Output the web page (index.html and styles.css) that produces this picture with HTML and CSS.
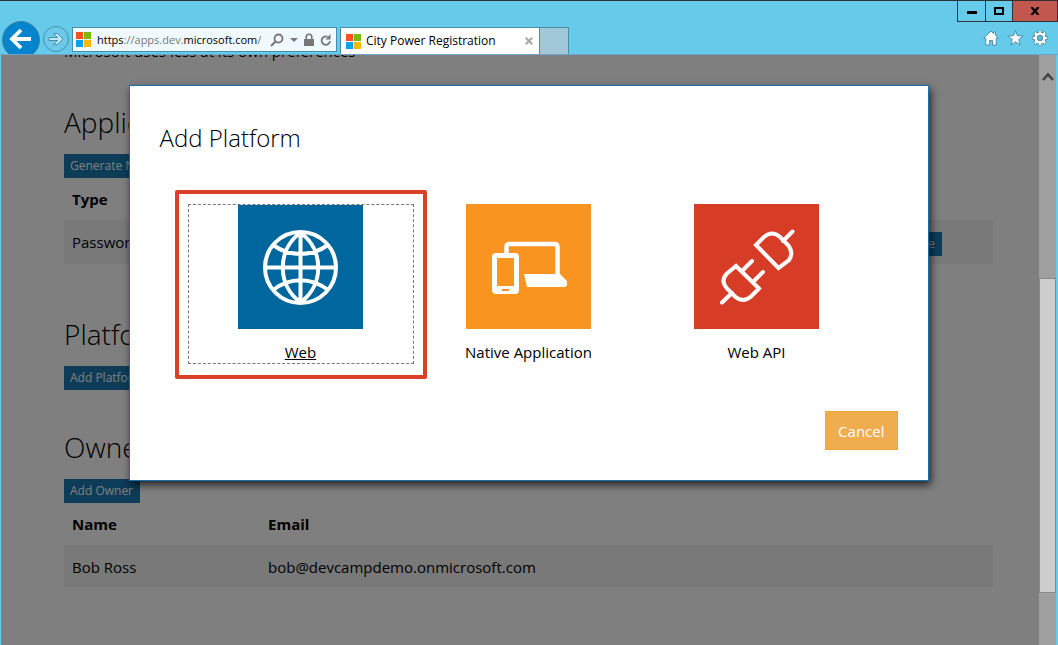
FILE: index.html
```html
<!DOCTYPE html>
<html lang="en">
<head>
<meta charset="utf-8">
<title>City Power Registration</title>
<link rel="stylesheet" href="styles.css">
</head>
<body>
<div class="window">
  <header class="chrome">
    <nav class="nav-buttons" aria-label="History">
      <button class="back" aria-label="Back">
        <svg width="40" height="40" viewBox="0 0 40 40"><circle cx="20" cy="20" r="18.5" fill="#0484cc" stroke="#3b7f9d"/><path d="M30 19H11M20 10L11 19l9 9" fill="none" stroke="#fff" stroke-width="3.800"/></svg>
      </button>
      <button class="forward" aria-label="Forward">
        <svg width="28" height="28" viewBox="0 0 28 28"><circle cx="14" cy="14" r="12.500" fill="#6cc9e9" stroke="#468fab"/><path d="M7 12.500h8.500l-4-4h4l5.500 5.500-5.500 5.500h-4l4-4H7z" fill="#bfe9f8" stroke="#468fab"/></svg>
      </button>
    </nav>
    <div class="address">
      <svg class="logo" width="15" height="15" viewBox="0 0 15 15"><path fill="#f8501f" d="M0 0h7v7H0z"/><path fill="#7db900" d="M8 0h7v7H8z"/><path fill="#00a3ee" d="M0 8h7v7H0z"/><path fill="#ffb800" d="M8 8h7v7H8z"/></svg>
      <a class="url" href="#"><b>https</b>://apps.dev.<b>microsoft.com</b>/</a>
      <button class="tool" aria-label="Search"><svg width="14" height="14" viewBox="0 0 14 14"><circle cx="8.500" cy="5.500" r="4" fill="none" stroke="#777" stroke-width="1.800"/><path d="M5.500 8.500L1 13" stroke="#777" stroke-width="2.200"/></svg></button>
      <button class="tool" aria-label="Show history"><svg width="8" height="14" viewBox="0 0 8 14"><path d="M0 5h8L4 9z" fill="#777"/></svg></button>
      <button class="tool" aria-label="Security"><svg width="10" height="14" viewBox="0 0 10 14"><path d="M0 6h10v7H0z" fill="#777"/><path d="M2.200 6V4a2.800 2.800 0 0 1 5.600 0v2" fill="none" stroke="#777" stroke-width="1.600"/></svg></button>
      <button class="tool" aria-label="Refresh"><svg width="12" height="14" viewBox="0 0 12 14"><path d="M7.500 3.800A4.200 4.200 0 1 0 10 8" fill="none" stroke="#777" stroke-width="1.800"/><path d="M10.500 1v5.500H5.500z" fill="#777"/></svg></button>
    </div>
    <div class="tab">
      <svg class="logo" width="15" height="15" viewBox="0 0 15 15"><path fill="#f8501f" d="M0 0h7v7H0z"/><path fill="#7db900" d="M8 0h7v7H8z"/><path fill="#00a3ee" d="M0 8h7v7H0z"/><path fill="#ffb800" d="M8 8h7v7H8z"/></svg>
      <span class="tab-title">City Power Registration</span>
      <button class="tool" aria-label="Close tab"><svg width="8" height="8" viewBox="0 0 8 8"><path d="M.8.8l6.400 6.400M7.200.8L.8 7.200" stroke="#a5a5a5" stroke-width="2"/></svg></button>
    </div>
    <button class="new-tab" aria-label="New tab"></button>
    <div class="right">
      <div class="controls">
        <button class="control minimize" aria-label="Minimize"><svg width="10" height="8" viewBox="0 0 10 8"><path d="M0 4h10v3H0z"/></svg></button>
        <button class="control maximize" aria-label="Maximize"><svg width="10" height="8" viewBox="0 0 10 8"><path d="M1 1h8v6H1z" fill="none" stroke="#000" stroke-width="2"/></svg></button>
        <button class="control close" aria-label="Close"><svg width="10" height="8" viewBox="0 0 10 8"><path d="M1.500 0l7 8M8.500 0l-7 8" stroke="#000" stroke-width="2.200"/></svg></button>
      </div>
      <div class="actions">
        <button class="tool" aria-label="Home"><svg width="16" height="16" viewBox="0 0 16 16"><path d="M8 1L.8 8.300h2V15h3.700v-4.500h3V15h3.700V8.300h2l-2.700-2.800V2h-2v1.500z" fill="#fff" stroke="#4687a0" stroke-width=".9"/></svg></button>
        <button class="tool" aria-label="Favorites"><svg width="17" height="16" viewBox="0 0 17 16"><path d="M8.500.7l1.900 5.100 5.800.2-4.500 3.500 1.600 5.500-4.800-3.200L3.700 15l1.600-5.500L.8 6l5.800-.2z" fill="#fff" stroke="#4687a0" stroke-width=".9"/></svg></button>
        <button class="tool" aria-label="Tools"><svg width="16" height="16" viewBox="0 0 16 16"><g fill="none"><path d="M8 .2v15.600M.2 8h15.600M2.500 2.500l11 11M13.500 2.500l-11 11" stroke="#4687a0" stroke-width="3.600"/><circle cx="8" cy="8" r="4.500" stroke="#4687a0" stroke-width="4"/><path d="M8 .8v3M8 12.200v3M.8 8h3M12.200 8h3M2.900 2.900l2 2M11.100 11.100l2 2M13.100 2.900l-2 2M4.900 11.100l-2 2" stroke="#fff" stroke-width="2.200"/><circle cx="8" cy="8" r="4.300" stroke="#fff" stroke-width="2.600"/></g><circle cx="8" cy="8" r="2.600" fill="#5fb9d8" stroke="#4687a0" stroke-width=".6"/></svg></button>
      </div>
    </div>
  </header>

  <div class="viewport">
    <main class="page">
      <p class="intro">Microsoft uses less at its own preferences</p>
      <section class="section">
        <h2>Application Secrets</h2>
        <button class="btn">Generate New Password</button>
        <table class="table secrets">
          <thead><tr><th>Type</th><th></th></tr></thead>
          <tbody><tr><td>Password</td><td class="row-action"><button class="btn">Delete</button></td></tr></tbody>
        </table>
      </section>
      <section class="section">
        <h2>Platforms</h2>
        <button class="btn">Add Platform</button>
      </section>
      <section class="section">
        <h2>Owners</h2>
        <button class="btn">Add Owner</button>
        <table class="table owners">
          <thead><tr><th class="name">Name</th><th>Email</th></tr></thead>
          <tbody><tr><td>Bob Ross</td><td>bob@devcampdemo.onmicrosoft.com</td></tr></tbody>
        </table>
      </section>
    </main>
    <div class="scrollbar">
      <button class="scroll-up" aria-label="Scroll up"><svg width="12" height="10" viewBox="0 0 12 10"><path d="M1 8l5-5.500L11 8" fill="none" stroke="#444" stroke-width="2.600"/></svg></button>
      <div class="thumb"></div>
    </div>

    <div class="overlay">
      <div class="dialog" role="dialog" aria-labelledby="dialog-title">
        <h1 id="dialog-title">Add Platform</h1>
        <div class="tiles">
          <a class="tile selected" href="#">
            <svg class="web" width="125" height="124" viewBox="0 0 125 124"><g fill="none" stroke="#fff" stroke-width="4"><circle cx="62.500" cy="62.500" r="35.500"/><path d="M62.500 27v71M27 62.500h71M62 28C39 45 39 80 62 97M63 28c23 17 23 52 0 69M35 40c17 12 38 12 55 0M35 85c17-13 38-13 55 0"/></g></svg>
            <span>Web</span>
          </a>
          <a class="tile" href="#">
            <svg class="native" width="125" height="125" viewBox="0 0 125 125"><path d="M40.500 51V43q0-3 3-3h45q3 0 3 3v29" fill="none" stroke="#fff" stroke-width="4.500"/><path d="M58 70h36l7 7v3q0 3-3 3H61z" fill="#fff"/><path fill-rule="evenodd" d="M30 49h19q4 0 4 4v33q0 4-4 4H30q-4 0-4-4V53q0-4 4-4zm1 5v28h17V54zm5 31v2h7v-2z" fill="#fff"/></svg>
            <span>Native Application</span>
          </a>
          <a class="tile" href="#">
            <svg class="api" width="125" height="125" viewBox="0 0 125 125"><g fill="none" stroke="#fff" stroke-width="4"><path d="M62 41L70 33q8-7 16 0l8 8q6 8 1 15l-10.500 8z"/><path d="M42 62L65 84.500l-8 8q-8 7-16 0l-8-8q-7-8 0-15z"/><path d="M89 37l9.500-9.500M38 89L28 98.500M48 67l10-10M59 78l10-10" stroke-linecap="round"/></g></svg>
            <span>Web API</span>
          </a>
        </div>
        <div class="footer"><button class="cancel">Cancel</button></div>
      </div>
    </div>
  </div>
</div>
</body>
</html>
```
FILE: styles.css
```css
* { box-sizing: border-box; }
body {
  margin: 0;
  font: 15px/20px "Open Sans", "Noto Sans", sans-serif;
  color: #000;
}
button {
  margin: 0;
  padding: 0;
  border: 0;
  background: none;
  font: inherit;
  color: inherit;
}
svg { display: block; flex: none; }
h1, h2, p { margin: 0; font-weight: 300; }

.window {
  display: flex;
  flex-direction: column;
  height: 100vh;
  overflow: hidden;
  background: #66cbea;
  border-top: 1px solid #303036;
}

/* Browser chrome */
.chrome {
  display: flex;
  align-items: flex-end;
  height: 54px;
  flex: none;
  border-bottom: 1px solid #6ea4c4;
}
.nav-buttons {
  display: flex;
  align-items: center;
  gap: 1px;
  height: 34px;
  padding-left: 1px;
  padding-right: 2px;
  overflow: hidden;
}
.nav-buttons button { align-self: flex-start; }
.forward { padding-top: 5px; }
.address {
  display: flex;
  align-items: center;
  gap: 6px;
  width: 265px;
  height: 25px;
  margin-bottom: 2px;
  padding: 0 4px 0 3px;
  border: 1px solid #468fab;
  background: #f0f9fd;
  font-size: 11px;
}
.url {
  flex: 1;
  min-width: 0;
  overflow: hidden;
  white-space: nowrap;
  color: #777;
  text-decoration: none;
}
.url b { font-weight: 400; color: #000; }
.tab {
  display: flex;
  align-items: center;
  gap: 5px;
  width: 200px;
  height: 27px;
  margin-left: 3px;
  padding: 0 6px 0 5px;
  border: 1px solid #468fab;
  border-bottom: 0;
  background: #fff;
  font-size: 12px;
}
.tab-title { flex: 1; white-space: nowrap; }
.new-tab {
  width: 29px;
  height: 27px;
  border: 1px solid #468fab;
  border-width: 1px 1px 0 0;
  background: #a0c8d8;
}
.right {
  display: flex;
  flex-direction: column;
  align-items: flex-end;
  justify-content: space-between;
  height: 53px;
  margin-left: auto;
  padding-bottom: 8px;
}
.controls { display: flex; border: 1px solid #303036; border-width: 0 0 1px 1px; }
.control {
  display: flex;
  align-items: center;
  justify-content: center;
  width: 27px;
  height: 20px;
  border-right: 1px solid #303036;
}
.minimize { width: 28px; }
.close { width: 45px; background: #c2574f; }
.actions { display: flex; gap: 8px; padding-right: 10px; }

/* Page */
.viewport {
  position: relative;
  display: flex;
  flex: 1;
  min-height: 0;
  margin: 0 2px 0 1px;
  background: #fff;
}
.page { flex: 1; padding: 0 46px 0 63px; overflow: hidden; }
.intro { height: 11px; line-height: 20px; margin: -14px 0 51px; font-weight: 400; }
.section { margin-bottom: 38px; }
h2 { font-size: 28px; line-height: 38px; margin-bottom: 13px; }
.btn {
  display: block;
  height: 24px;
  padding: 0 7px 0 6px;
  background: #1878b0;
  color: #fff;
  font-size: 12px;
  white-space: nowrap;
}
.table { width: 100%; border-collapse: collapse; }
th { height: 42px; padding: 0 8px; text-align: left; font-weight: 700; }
td { height: 42px; padding: 2px 8px 0; background: #f2f2f2; }
.secrets { margin-bottom: 51px; }
.secrets td { height: 44px; padding-top: 0; }
.name { width: 196px; }
.secrets .row-action { padding: 4px 51px 0; }
.row-action .btn { margin-left: auto; }

.scrollbar {
  display: flex;
  flex-direction: column;
  width: 17px;
  background: #9f9f9f;
  z-index: 1;
}
.scroll-up {
  display: flex;
  align-items: flex-end;
  justify-content: center;
  height: 27px;
  margin-bottom: 196px;
}
.thumb { height: 315px; border: 1px solid #888; background: #cdcdcd; }

/* Dialog */
.overlay {
  position: absolute;
  inset: 0;
  display: flex;
  align-items: flex-start;
  justify-content: center;
  padding-top: 30px;
  background: rgba(0, 0, 0, .5);
}
.dialog {
  width: 800px;
  max-width: 90%;
  padding: 32px 30px;
  padding-bottom: 30px;
  border: 1px solid #1471ad;
  background: #fff;
  box-shadow: 2px 4px 8px rgba(0, 0, 0, .7);
}
h1 { font-size: 24px; line-height: 40px; }
.tiles {
  display: grid;
  grid-template-columns: repeat(3, 226px);
  justify-content: center;
  gap: 2px;
  margin-top: 46px;
}
.tile {
  position: relative;
  display: flex;
  flex-direction: column;
  align-items: center;
  justify-content: space-between;
  height: 160px;
  color: #000;
  text-decoration: none;
}
.tile span { margin-bottom: 2px; }
.selected { border: 1px dashed #777; text-decoration: underline; }
.selected span { margin-bottom: 1px; }
.selected::after {
  content: "";
  position: absolute;
  inset: -15px -14px -16px -14px;
  border: 4px solid #dc3f27;
  border-radius: 2px;
}
.web { background: #00669e; }
.native { background: #f99420; }
.api { background: #d73d26; }
.footer { display: flex; justify-content: flex-end; margin-top: 47px; }
.cancel {
  height: 39px;
  padding: 0 12px;
  border: 1px solid #eca43c;
  background: #f0ad4e;
  color: #fff;
}
```
